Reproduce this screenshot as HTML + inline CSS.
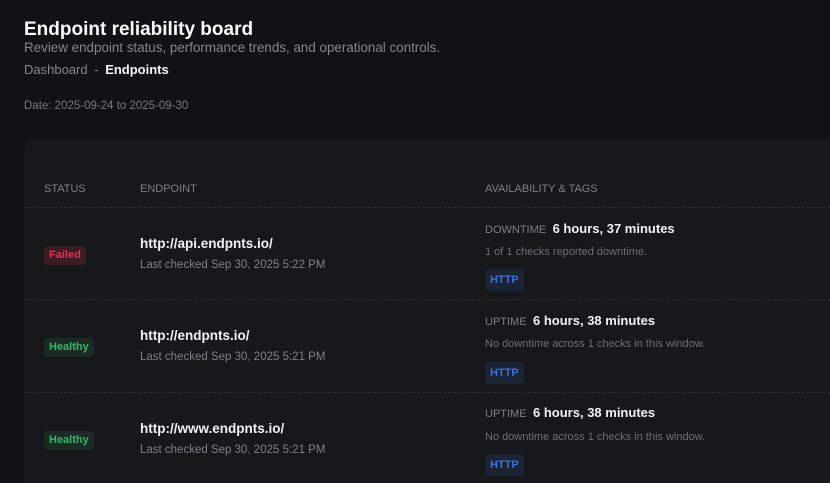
<!DOCTYPE html>
<html><head><style>
*{margin:0;padding:0;box-sizing:border-box}
html,body{width:830px;height:483px;overflow:hidden}
body{background:#111215;font-family:"Liberation Sans",sans-serif;position:relative}
.a{position:absolute;white-space:nowrap}
.card{position:absolute;left:24px;top:139px;width:830px;height:360px;background:#17181c;border-radius:10px}
.line{position:absolute;left:24px;width:806px;border-top:1px dashed #2a2c31}
.th{font-size:11px;color:#7d8088;top:183px}
.badge{font-size:11px;font-weight:bold;padding:3px 5px 4px;border-radius:4px}
.url{font-size:13.5px;font-weight:bold;color:#f1f2f4}
.sub{font-size:11.5px;color:#7d8088}
.lbl{font-size:11px;color:#7d8088}
.val{font-size:13px;font-weight:bold;color:#f1f2f4}
.note{font-size:11px;color:#6c6f77}
.tag{font-size:11px;font-weight:bold;color:#3b6fe0;background:#1b2433;padding:5px 5px;border-radius:4px}
</style></head><body>
<div class="a" style="left:24px;top:19px;font-size:19px;font-weight:bold;color:#fafafa">Endpoint reliability board</div>
<div class="a" style="left:24px;top:40px;font-size:13.4px;color:#83868d">Review endpoint status, performance trends, and operational controls.</div>
<div class="a" style="left:24px;top:62px;font-size:13px;color:#83868d">Dashboard <span style="margin:0 3px">-</span> <b style="color:#f5f5f5">Endpoints</b></div>
<div class="a" style="left:24px;top:100px;font-size:11.5px;color:#75787f">Date: 2025-09-24 to 2025-09-30</div>
<div class="card"></div>
<div class="a th" style="left:44px">STATUS</div>
<div class="a th" style="left:140px">ENDPOINT</div>
<div class="a th" style="left:485px">AVAILABILITY &amp; TAGS</div>
<div class="line" style="top:207px"></div>
<div class="line" style="top:299px"></div>
<div class="line" style="top:392px"></div>

<div class="a badge" style="left:44px;top:246px;color:#e0334f;background:#3a1c22">Failed</div>
<div class="a url" style="left:140px;top:236px">http://api.endpnts.io/</div>
<div class="a sub" style="left:140px;top:259px">Last checked Sep 30, 2025 5:22 PM</div>
<div class="a" style="left:485px;top:220px"><span class="lbl">DOWNTIME</span> <span class="val" style="margin-left:2px">6 hours, 37 minutes</span></div>
<div class="a note" style="left:485px;top:246px">1 of 1 checks reported downtime.</div>
<div class="a tag" style="left:485px;top:269px">HTTP</div>

<div class="a badge" style="left:44px;top:338px;color:#2fb866;background:#1b2a22">Healthy</div>
<div class="a url" style="left:140px;top:328px">http://endpnts.io/</div>
<div class="a sub" style="left:140px;top:351px">Last checked Sep 30, 2025 5:21 PM</div>
<div class="a" style="left:485px;top:312px"><span class="lbl">UPTIME</span> <span class="val" style="margin-left:2px">6 hours, 38 minutes</span></div>
<div class="a note" style="left:485px;top:338px">No downtime across 1 checks in this window.</div>
<div class="a tag" style="left:485px;top:362px">HTTP</div>

<div class="a badge" style="left:44px;top:431px;color:#2fb866;background:#1b2a22">Healthy</div>
<div class="a url" style="left:140px;top:421px">http://www.endpnts.io/</div>
<div class="a sub" style="left:140px;top:444px">Last checked Sep 30, 2025 5:21 PM</div>
<div class="a" style="left:485px;top:404px"><span class="lbl">UPTIME</span> <span class="val" style="margin-left:2px">6 hours, 38 minutes</span></div>
<div class="a note" style="left:485px;top:431px">No downtime across 1 checks in this window.</div>
<div class="a tag" style="left:485px;top:454px">HTTP</div>
</body></html>
